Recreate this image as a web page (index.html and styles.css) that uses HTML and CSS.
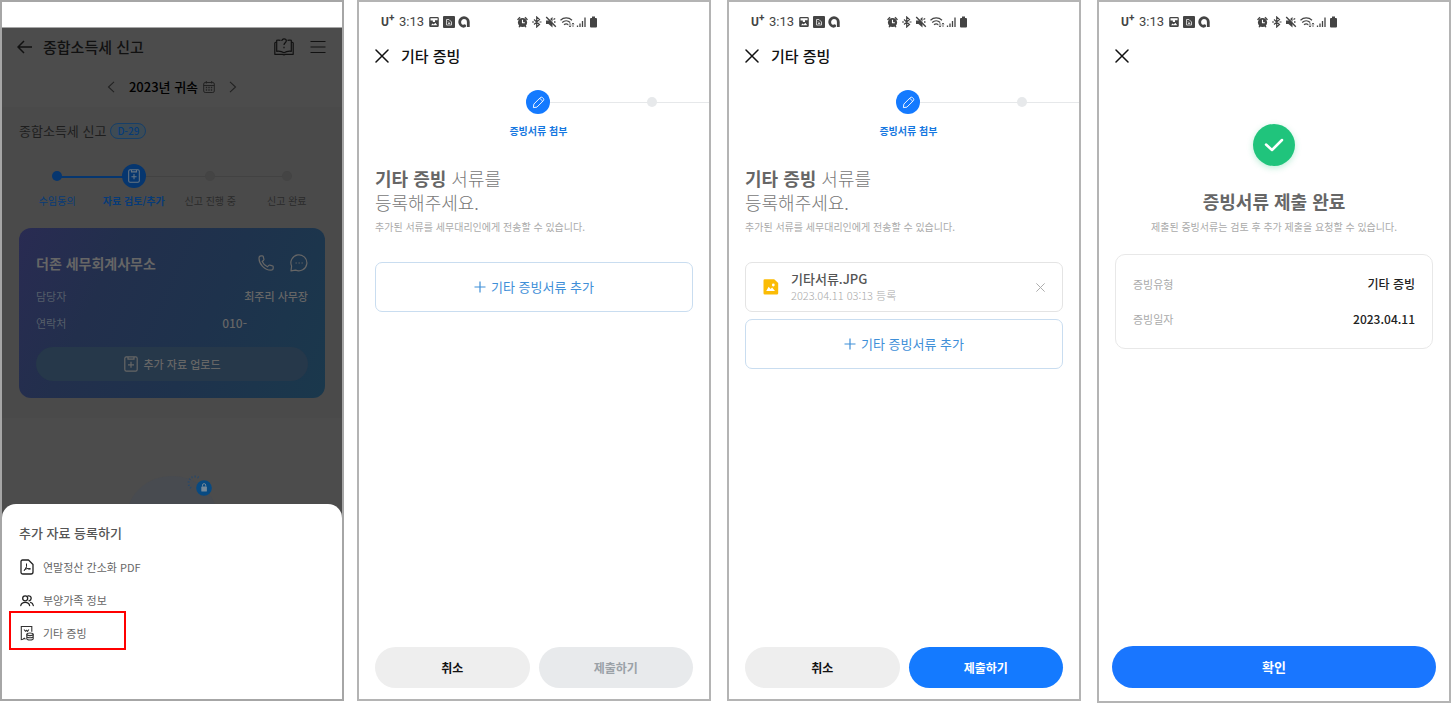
FILE: index.html
```html
<!DOCTYPE html>
<html lang="ko">
<head>
<meta charset="utf-8">
<meta name="viewport" content="width=device-width, initial-scale=1">
<title>기타 증빙 등록</title>
<link rel="stylesheet" href="styles.css">
</head>
<body>
<svg class="sprite" aria-hidden="true">
  <symbol id="close" viewBox="0 0 14 14"><path d="M1 1l12 12M13 1L1 13" fill="none" stroke="currentColor" stroke-width="1.5" stroke-linecap="round"/></symbol>
  <symbol id="plus" viewBox="0 0 12 12"><path d="M6 .5v11M.5 6h11" fill="none" stroke="currentColor" stroke-width="1.2"/></symbol>
  <symbol id="clipboard" viewBox="0 0 14 16"><g fill="none" stroke="currentColor" stroke-width="1.2"><rect x=".8" y=".8" width="12.4" height="14.4" rx="1.6"/><path d="M4 1v2.2h6V1M7 5.8v6M4 8.8h6"/></g></symbol>
  <symbol id="pencil" viewBox="0 0 14 14"><path d="M1.500 12.500l.5-3.800 6.700-6.700c.9-.9 2-.9 2.800-.1l.6.6c.8.800.8 1.900-.1 2.800l-6.700 6.700zM8 2.800c1.500.2 2.800 1.500 3.100 3.100" fill="none" stroke="currentColor" stroke-width="1" stroke-linejoin="round"/></symbol>
  <symbol id="status-left" viewBox="0 0 42 12">
    <path fill="#444" fill-rule="evenodd" d="M1.500 1h7a1.300 1.300 0 0 1 1.300 1.300v7.400a1.300 1.300 0 0 1-1.300 1.300h-7A1.300 1.300 0 0 1 .2 9.700V2.300A1.300 1.300 0 0 1 1.500 1zM1.500 2.300v2.200h2.300V6H6V4.200h2.600V2.300zM2 9.300h6.300L6.300 6.700 4.800 8.500 3.700 7.400z"/>
    <rect x="14" y="0" width="12" height="12" rx="1" fill="#444"/>
    <path d="M17.500 9V3.500h2.500l2.500 2.500v3zM19 5.500l2 2M19 7.500h2" fill="none" stroke="#ddd" stroke-width=".9"/>
    <path d="M39.300 11V6a4.300 4.300 0 1 0-4.300 4.300" fill="none" stroke="#444" stroke-width="2.800"/>
    <circle cx="35.500" cy="9.800" r="1.600" fill="#444"/>
  </symbol>
  <symbol id="status-right" viewBox="0 0 82 12">
    <g fill="#444"><circle cx="5.500" cy="6.500" r="4.600"/><path d="M0 3.500L2.500.8l1 1L1 4.300zM11 3.500L8.500.8l-1 1L10 4.300zM1.500 11l1-2 1.200 1-1 1.500zM9.500 11l-1-2-1.200 1 1 1.500z"/></g>
    <path d="M5.500 3.800v3h2.300" fill="none" stroke="#fff" stroke-width="1.100"/>
    <path d="M17 3.500l5.500 5-2.800 2.500V1l2.800 2.500-5.500 5M15 6h2M22.500 6h2" fill="none" stroke="#444" stroke-width="1.200"/>
    <path d="M29 4.500h2.500l4-3.500v10.500l-4-3.500H29z" fill="#444"/><path d="M30 .5l9.500 9.500" stroke="#fff" stroke-width="1"/><path d="M29.200 1l9.600 9.800M36.500 3.500l1.700-1M37 6h1.500" stroke="#444" stroke-width="1.400"/>
    <path d="M43.500 4.200a8.500 8.500 0 0 1 11.500 0M45.200 6.500a6 6 0 0 1 8 0M47 8.700a3.500 3.500 0 0 1 4.300 0" fill="none" stroke="#444" stroke-width="1.200"/><path d="M53 7v4M51.800 9.800L53 11l1.200-1.200M56 11V7M54.800 8.200L56 7l1.200 1.200" fill="none" stroke="#444" stroke-width=".8"/>
    <path d="M60.500 11V9.500M63 11V7.500M65.500 11V5M68 11V1.500" stroke="#444" stroke-width="1.300"/>
    <path d="M74 11.500a1 1 0 0 1-1-1V3a1 1 0 0 1 1-1h1V.5h3V2h1a1 1 0 0 1 1 1v7.500a1 1 0 0 1-1 1z" fill="#444"/>
  </symbol>
</svg>

<main class="page">
  <section class="panel panel-home">
    <div class="screen">
      <header class="home-header">
        <button class="icon-button" aria-label="뒤로"><svg width="16" height="14" viewBox="0 0 16 14"><path d="M7 1L1 7l6 6M1 7h14" fill="none" stroke="currentColor" stroke-width="1.500"/></svg></button>
        <h1 class="home-title">종합소득세 신고</h1>
        <button class="icon-button" aria-label="도움말"><svg width="20" height="18" viewBox="0 0 20 18"><g fill="none" stroke="currentColor" stroke-width="1.200" stroke-linejoin="round"><path d="M6.500 2.300C4.800 2 3.500 2 2.700 2.300v11c2.500-.3 5 0 7.300 1.500 2.300-1.500 4.800-1.800 7.300-1.500v-11c-.8-.3-2.100-.3-3.800 0M2.700 4C1.500 4 .8 4.300.8 5v11.300h7.700c.8.700 2.200.7 3 0h7.700V5c0-.7-.7-1-1.900-1"/><path d="M7.800 3c0-3 4.500-2.800 4.500-.2C12.300 4.800 10 4.800 10 7M10 8.800v1.400"/></g></svg></button>
        <button class="icon-button" aria-label="메뉴"><svg width="16" height="14" viewBox="0 0 16 14"><path d="M.5 1.500h15M.5 7h15M.5 12.500h15" stroke="currentColor" stroke-width="1.200"/></svg></button>
      </header>
      <div class="year-nav">
        <button class="icon-button" aria-label="이전 연도"><svg width="8" height="12" viewBox="0 0 8 12"><path d="M7 .8L1.500 6 7 11.200" fill="none" stroke="currentColor" stroke-width="1.100"/></svg></button>
        <span class="year">2023년 귀속
          <svg width="12" height="12" viewBox="0 0 12 12"><g fill="none" stroke="#222"><rect x=".7" y="1.500" width="10.600" height="10" rx="1.500"/><path d="M.7 4.500h10.600M3.300 0v2.500M8.700 0v2.500"/><path d="M2.800 6.500h1.400M5.300 6.500h1.400M7.800 6.500h1.400M2.800 9h1.400M5.300 9h1.400M7.800 9h1.400" stroke-width="1.300"/></g></svg>
        </span>
        <button class="icon-button" aria-label="다음 연도"><svg width="8" height="12" viewBox="0 0 8 12"><path d="M1 .8L6.500 6 1 11.200" fill="none" stroke="currentColor" stroke-width="1.100"/></svg></button>
      </div>
      <div class="report">
        <h2 class="report-title">종합소득세 신고 <span class="badge">D-29</span></h2>
        <ol class="progress">
          <li class="progress-step is-done"><span class="marker"></span>수임동의</li>
          <li class="progress-step is-current"><span class="marker"><svg width="12" height="14"><use href="#clipboard"/></svg></span>자료 검토/추가</li>
          <li class="progress-step"><span class="marker"></span>신고 진행 중</li>
          <li class="progress-step"><span class="marker"></span>신고 완료</li>
        </ol>
        <article class="office">
          <div class="office-head">
            <h3 class="office-name">더존 세무회계사무소</h3>
            <button class="icon-button" aria-label="전화"><svg width="16" height="16" viewBox="0 0 16 16"><path d="M1 3.200C1 1.700 2 .8 3 .8h1.300c.5 0 .8.200.9.700l.7 2.600c.1.500 0 .8-.3 1.100L4.200 6.500c1 2.300 2.900 4.200 5.200 5.300l1.400-1.400c.3-.3.600-.4 1-.3l2.700.7c.5.100.7.500.7.900V13c0 1.200-1 2.200-2.300 2.200C6.500 15.200 1 9 1 3.200z" fill="none" stroke="currentColor" stroke-width="1.200"/></svg></button>
            <button class="icon-button" aria-label="채팅"><svg width="18" height="18" viewBox="0 0 18 18"><path d="M1 16.800l.6-4.700a8 8 0 1 1 4 4z" fill="none" stroke="currentColor" stroke-width="1.200" stroke-linejoin="round"/><path d="M5.500 9h1.300M8.500 9h1.300M11.500 9h1.300" stroke="currentColor" stroke-width="1.200"/></svg></button>
          </div>
          <dl class="contact">
            <div class="contact-row"><dt>담당자</dt><dd>최주리 사무장</dd></div>
            <div class="contact-row"><dt>연락처</dt><dd class="phone">010-</dd></div>
          </dl>
          <button class="upload"><svg width="14" height="16"><use href="#clipboard"/></svg>추가 자료 업로드</button>
        </article>
      </div>
      <svg class="scene" width="90" height="44" viewBox="0 0 90 44" aria-hidden="true">
        <ellipse cx="45" cy="43" rx="45" ry="41" fill="#484b50"/>
        <path d="M64 14a6 6 0 0 1 8-10" fill="none" stroke="#24496e" stroke-width="2" stroke-dasharray="1 2"/>
        <circle cx="77" cy="14" r="7.800" fill="#084a82"/><rect x="74.300" y="12.500" width="5.600" height="5" rx=".6" fill="#75899a"/><path d="M75.500 12.500v-1.300a1.600 1.600 0 0 1 3.200 0v1.300" fill="none" stroke="#75899a"/>
      </svg>
    </div>
    <div class="sheet" role="dialog" aria-labelledby="sheet-title">
      <h2 class="sheet-title" id="sheet-title">추가 자료 등록하기</h2>
      <ul class="sheet-list">
        <li><button class="sheet-item"><svg width="14" height="16" viewBox="0 0 14 16"><g fill="none" stroke="#222" stroke-width="1.300" stroke-linejoin="round"><path d="M2.500 1h6L13 5.500V13a2 2 0 0 1-2 2H2.800A1.800 1.800 0 0 1 1 13.200V2.500A1.500 1.500 0 0 1 2.500 1z"/><path d="M6.500 4.500v3.200L4 12M6.500 8.500c1 1.500 2.500 2 4 1.500M4.500 10.700c2-1.200 3.500-1.400 6-1" stroke-width="1"/></g></svg>연말정산 간소화 PDF</button></li>
        <li><button class="sheet-item"><svg width="14" height="16" viewBox="0 0 14 16"><g fill="none" stroke="#222" stroke-width="1.300" stroke-linecap="round"><circle cx="5.200" cy="6.300" r="2.500"/><path d="M.8 13.500c.8-4.300 8-4.300 8.800 0M8 3.900c3.600-.8 4.300 4 1 4.900M10.500 10.300c1.500.3 2.500 1.500 2.800 3.200"/></g></svg>부양가족 정보</button></li>
        <li class="is-highlighted"><button class="sheet-item"><svg width="14" height="16" viewBox="0 0 14 16"><g fill="none" stroke="#333" stroke-width="1.100"><path d="M5.500 14.200l-1.300-1-1.200 1-1.700.3V1.500h10.500v5.300M4 4.500l1.500 1.800 1-1 1 1 1.400-1.800"/><ellipse cx="10" cy="9.300" rx="3.200" ry="1.300"/><path d="M6.800 9.300v4.500c0 1.600 6.400 1.600 6.400 0V9.300M6.800 11.500c0 1.600 6.400 1.600 6.400 0"/></g></svg>기타 증빙</button></li>
      </ul>
    </div>
  </section>

  <div class="flow">
    <section class="panel">
      <div class="status"><span class="carrier">U<sup>+</sup></span><span class="clock">3:13</span><svg class="status-apps" width="42" height="12"><use href="#status-left"/></svg><svg width="82" height="12"><use href="#status-right"/></svg></div>
      <header class="form-header"><button class="icon-button" aria-label="닫기"><svg width="14" height="14"><use href="#close"/></svg></button><h2 class="form-title">기타 증빙</h2></header>
      <ol class="steps"><li class="step is-active"><span class="step-mark"><svg width="13" height="13"><use href="#pencil"/></svg></span><span>증빙서류 첨부</span></li><li class="step"><span class="step-mark"></span></li></ol>
      <div class="body">
        <h3 class="prompt"><strong>기타 증빙</strong> 서류를<br>등록해주세요.</h3>
        <p class="hint">추가된 서류를 세무대리인에게 전송할 수 있습니다.</p>
        <div class="files"><button class="add"><svg width="12" height="12"><use href="#plus"/></svg>기타 증빙서류 추가</button></div>
      </div>
      <footer class="actions"><button class="pill">취소</button><button class="pill pill-disabled" disabled>제출하기</button></footer>
    </section>

    <section class="panel">
      <div class="status"><span class="carrier">U<sup>+</sup></span><span class="clock">3:13</span><svg class="status-apps" width="42" height="12"><use href="#status-left"/></svg><svg width="82" height="12"><use href="#status-right"/></svg></div>
      <header class="form-header"><button class="icon-button" aria-label="닫기"><svg width="14" height="14"><use href="#close"/></svg></button><h2 class="form-title">기타 증빙</h2></header>
      <ol class="steps"><li class="step is-active"><span class="step-mark"><svg width="13" height="13"><use href="#pencil"/></svg></span><span>증빙서류 첨부</span></li><li class="step"><span class="step-mark"></span></li></ol>
      <div class="body">
        <h3 class="prompt"><strong>기타 증빙</strong> 서류를<br>등록해주세요.</h3>
        <p class="hint">추가된 서류를 세무대리인에게 전송할 수 있습니다.</p>
        <div class="files">
          <div class="file">
            <svg width="16" height="16" viewBox="0 0 16 16"><path d="M1.800.3h9.400L15.200 4v10.300a1.300 1.300 0 0 1-1.300 1.300H1.800A1.300 1.300 0 0 1 .5 14.300V1.600A1.300 1.300 0 0 1 1.800.3z" fill="#fbbc05"/><path d="M3.200 12l2.500-4.300 1.800 2.400 1.600-1.500L12 12z" fill="#fff"/><circle cx="10.300" cy="6" r="1.400" fill="#fff"/></svg>
            <div class="file-text"><span class="file-name">기타서류.JPG</span><span class="file-date">2023.04.11 03:13 등록</span></div>
            <button class="icon-button file-remove" aria-label="파일 삭제"><svg width="9" height="9"><use href="#close"/></svg></button>
          </div>
          <button class="add"><svg width="12" height="12"><use href="#plus"/></svg>기타 증빙서류 추가</button>
        </div>
      </div>
      <footer class="actions"><button class="pill">취소</button><button class="pill pill-primary">제출하기</button></footer>
    </section>

    <section class="panel panel-done">
      <div class="status"><span class="carrier">U<sup>+</sup></span><span class="clock">3:13</span><svg class="status-apps" width="42" height="12"><use href="#status-left"/></svg><svg width="82" height="12"><use href="#status-right"/></svg></div>
      <header class="form-header"><button class="icon-button" aria-label="닫기"><svg width="14" height="14"><use href="#close"/></svg></button></header>
      <div class="body result">
        <span class="check"><svg width="20" height="14" viewBox="0 0 20 14"><path d="M2 6.500l6 5.500L18 2" fill="none" stroke="#fff" stroke-width="2.500" stroke-linecap="round" stroke-linejoin="round"/></svg></span>
        <h2 class="result-title">증빙서류 제출 완료</h2>
        <p class="hint">제출된 증빙서류는 검토 후 추가 제출을 요청할 수 있습니다.</p>
        <dl class="receipt">
          <div class="receipt-row"><dt>증빙유형</dt><dd>기타 증빙</dd></div>
          <div class="receipt-row"><dt>증빙일자</dt><dd>2023.04.11</dd></div>
        </dl>
      </div>
      <footer class="actions"><button class="pill pill-confirm">확인</button></footer>
    </section>
  </div>
</main>
</body>
</html>
```

FILE: styles.css
```css
*, *::before, *::after { box-sizing: border-box; }

body, h1, h2, h3, p, ol, ul, dl, dd { margin: 0; padding: 0; }

body {
  background: #fff;
  color: #111;
  font-family: "Noto Sans CJK KR", "Noto Sans", sans-serif;
  font-size: 11px;
  line-height: 16px;
}

h1, h2, h3 { font-weight: 500; }
ol, ul { list-style: none; }

button {
  margin: 0;
  padding: 0;
  border: 0;
  background: none;
  color: inherit;
  font: inherit;
  cursor: pointer;
}

svg { display: block; flex: none; }
.sprite { position: absolute; width: 0; height: 0; }
.icon-button { display: flex; flex: none; }

.page {
  display: grid;
  grid-template-columns: minmax(0, 344fr) minmax(0, 1094fr);
  gap: 13px;
  min-height: 100vh;
}

.flow {
  display: grid;
  grid-template-columns: repeat(3, minmax(0, 1fr));
  gap: 16px;
}

.panel {
  display: flex;
  flex-direction: column;
  min-width: 0;
  margin-bottom: 3px;
  border: 2px solid #b4b4b4;
  background: #fff;
}

.panel-done { margin-bottom: 1px; }

/* Home screen behind the bottom sheet */
.panel-home {
  padding-top: 25px;
  border-color: #a6a6a6;
}

.screen {
  flex: 1;
  margin-bottom: -14px;
  border-top: 1px solid #a6a6a6;
  background: #4c4c4c;
}

.home-header {
  display: flex;
  align-items: center;
  gap: 16px;
  height: 38px;
  padding: 0 16px 0 15px;
}

.home-title {
  flex: 1;
  margin-left: -6px;
  font-size: 15px;
  line-height: 20px;
}

.year-nav {
  display: flex;
  align-items: center;
  justify-content: center;
  gap: 14px;
  height: 41px;
  color: #222;
}

.year {
  display: flex;
  align-items: center;
  gap: 5px;
  color: #000;
  font-size: 13px;
  font-weight: 500;
}

.report {
  padding: 14px 17px 20px;
  background: #4a4a4a;
}

.report-title {
  display: flex;
  align-items: center;
  gap: 4px;
  color: #1e1e1e;
  font-size: 13px;
  font-weight: 400;
  line-height: 20px;
}

.badge {
  padding: 0 6px;
  border: 1px solid #173f68;
  border-radius: 8px;
  background: #3e4b54;
  color: #073b78;
  font-size: 10px;
  font-weight: 500;
  line-height: 14px;
}

.progress {
  display: grid;
  grid-template-columns: repeat(4, 1fr);
  padding: 23px 0 19px;
}

.progress-step {
  position: relative;
  display: flex;
  flex-direction: column;
  align-items: center;
  gap: 5px;
  color: #2b2b2b;
  font-size: 10px;
  white-space: nowrap;
}

.progress-step + .progress-step::before {
  content: "";
  position: absolute;
  top: 12px;
  right: 50%;
  width: 100%;
  height: 1px;
  background: #424242;
}

.progress-step.is-current::before { height: 2px; background: #06366f; }
.progress-step.is-done, .progress-step.is-current { color: #073b78; }
.progress-step.is-current { font-weight: 700; }

.marker {
  z-index: 1;
  display: grid;
  place-items: center;
  width: 10px;
  height: 10px;
  margin: 7px 0;
  border-radius: 50%;
  background: #444;
}

.is-done .marker { background: #06366f; }
.is-current .marker { width: 24px; height: 24px; margin: 0; background: #06366f; color: #677583; }

.office {
  padding: 25px 17px 17px;
  border-radius: 12px;
  background: linear-gradient(115deg, #292b52 0%, #222f4c 28%, #1e324c 60%, #1a384c 100%);
  color: #666;
}

.office-head { display: flex; align-items: center; gap: 16px; }
.office-name { flex: 1; font-size: 14px; font-weight: 700; line-height: 20px; }

.contact { padding: 15px 0 16px; }
.contact-row { display: flex; justify-content: space-between; }
.contact-row + .contact-row { margin-top: 11px; }
.contact-row dd { font-weight: 500; }
.contact-row dt { color: #555e69; }
.contact-row .phone { padding-right: 61px; font-size: 12px; }

.upload {
  display: flex;
  align-items: center;
  justify-content: center;
  gap: 6px;
  width: 100%;
  height: 34px;
  border-radius: 17px;
  background: #26384a;
  font-weight: 500;
}

.scene { margin: 56px auto 0; }

.sheet {
  position: relative;
  padding: 19px 17px 50px;
  border-radius: 14px 14px 0 0;
  background: #fff;
}

.sheet-title { color: #555; font-size: 13px; line-height: 20px; }
.sheet-list { margin-top: 7px; }
.sheet-list li { position: relative; }

.sheet-item {
  display: flex;
  align-items: center;
  gap: 9px;
  height: 33px;
  padding-left: 1px;
  color: #666;
}

.is-highlighted::after {
  content: "";
  position: absolute;
  top: -5px;
  left: -10px;
  width: 117px;
  height: 39px;
  border: 2px solid #f00;
  pointer-events: none;
}

/* Document registration screens */
.status {
  display: flex;
  align-items: center;
  height: 40px;
  padding-left: 22px;
  color: #444;
  font-family: Roboto, sans-serif;
  font-size: 13px;
}

.carrier { width: 18px; font-size: 12px; font-weight: 700; line-height: 12px; }
.carrier sup { font-size: 10px; line-height: 0; }
.clock { width: 30px; }
.status-apps { margin-right: 46px; }

.form-header {
  display: flex;
  align-items: center;
  gap: 12px;
  height: 28px;
  padding: 0 16px;
}

.form-title { font-size: 15px; line-height: 20px; }

.steps {
  display: grid;
  grid-template-columns: repeat(2, 1fr);
  padding: 20px 0 0 35%;
}

.step {
  position: relative;
  display: flex;
  flex-direction: column;
  align-items: center;
  gap: 9px;
  color: #1677e0;
  font-size: 10px;
  font-weight: 700;
}

.step::before {
  content: "";
  position: absolute;
  top: 12px;
  left: 0;
  width: 100%;
  height: 1px;
  background: #e6e8ea;
}

.step.is-active::before { left: 50%; width: 50%; }

.step-mark {
  z-index: 1;
  display: grid;
  place-items: center;
  width: 10px;
  height: 10px;
  margin: 7px 0;
  border-radius: 50%;
  background: #e7e9eb;
  color: #fff;
}

.is-active .step-mark { width: 24px; height: 24px; margin: 0; background: #147aff; }

.body { flex: 1; padding: 27px 16px 0; }
.prompt { color: #777; font-size: 18px; font-weight: 300; line-height: 24px; }
.prompt strong { color: #666; font-weight: 700; }
.hint { margin-top: 5px; color: #aaa; font-size: 10px; }
.files { display: grid; gap: 7px; margin-top: 27px; }

.add, .file {
  display: flex;
  align-items: center;
  height: 50px;
  border: 1px solid #c9ddf0;
  border-radius: 7px;
}

.add {
  justify-content: center;
  gap: 5px;
  color: #3f8fd8;
  font-size: 13px;
}

.file { gap: 12px; padding: 0 17px; border-color: #e4e4e4; }
.file-text { display: flex; flex: 1; flex-direction: column; }
.file-name { color: #555; font-size: 13px; font-weight: 500; }
.file-date { color: #aaa; font-weight: 300; }
.file-remove { color: #aaa; }

.actions { display: flex; gap: 9px; padding: 0 16px 11px; }

.pill {
  flex: 1;
  height: 41px;
  border-radius: 21px;
  background: #eee;
  font-size: 12px;
  font-weight: 700;
}

.pill-disabled { background: #e8eaec; color: #9aa1a7; cursor: default; }
.pill-primary { background: #147aff; color: #fff; }

.panel-done .actions { padding: 0 13px 13px; }
.pill-confirm { height: 42px; background: #1976ff; color: #fff; font-size: 13px; }

.result {
  display: flex;
  flex-direction: column;
  align-items: center;
  padding-top: 54px;
}

.check {
  display: grid;
  place-items: center;
  width: 42px;
  height: 42px;
  border-radius: 50%;
  background: #20c47c;
  box-shadow: 0 2px 6px rgba(32, 196, 124, 0.3);
}

.result-title {
  margin-top: 23px;
  color: #666;
  font-size: 18px;
  font-weight: 700;
  line-height: 24px;
}

.result .hint { margin-top: 6px; }

.receipt {
  width: 100%;
  margin-top: 19px;
  padding: 21px 17px;
  border: 1px solid #e8e8e8;
  border-radius: 10px;
}

.receipt-row { display: flex; justify-content: space-between; color: #aaa; }
.receipt-row + .receipt-row { margin-top: 19px; }
.receipt-row dd { color: #222; font-size: 12px; font-weight: 500; }
```
